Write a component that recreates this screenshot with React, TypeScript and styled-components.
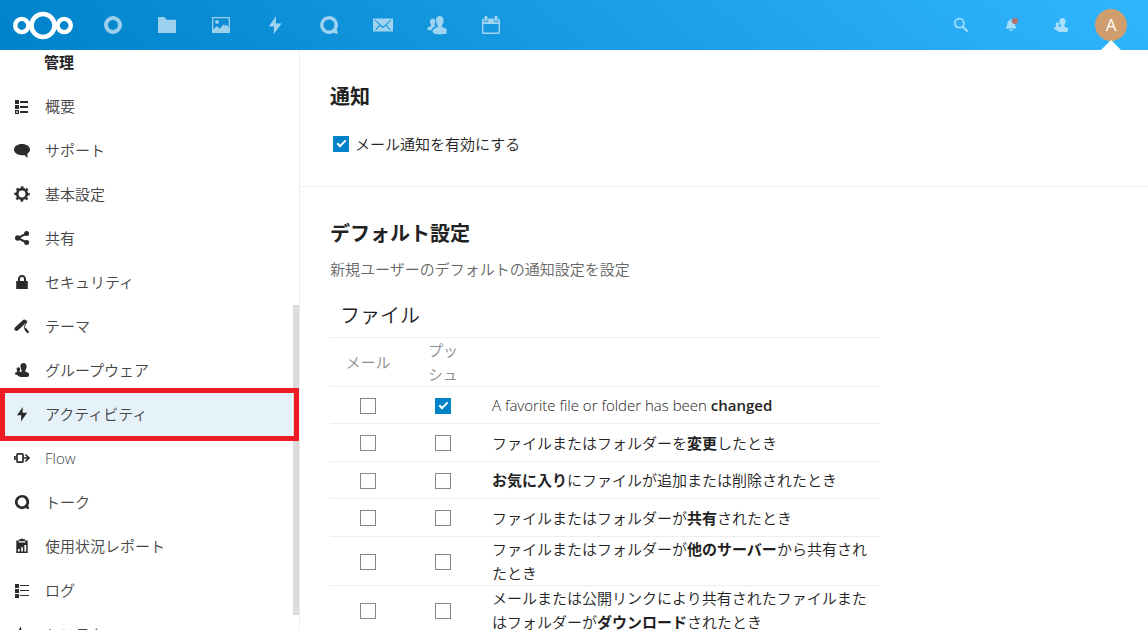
import React from 'react';
import styled, { createGlobalStyle } from 'styled-components';

const GlobalStyle = createGlobalStyle`
  *, *::before, *::after { box-sizing: border-box; }
  body {
    margin: 0;
    background: #fff;
    color: #222;
    font-family: "Open Sans", "Noto Sans CJK JP", sans-serif;
    font-size: 15px;
    font-weight: 350;
    line-height: 24px;
  }
  strong { font-weight: 600; }
`;

const Page = styled.div`
  display: flex;
  flex-direction: column;
  height: 100vh;
  overflow: hidden;
`;

const Header = styled.header`
  display: flex;
  flex: none;
  align-items: center;
  justify-content: space-between;
  height: 50px;
  padding: 0 12px;
  background: linear-gradient(40deg, #0082c9 0%, #30b6ff 100%);
`;

const HeaderGroup = styled.div`
  display: flex;
  align-items: center;
`;

const LogoLink = styled.a`
  display: flex;
  width: 62px;
  margin-right: 12px;
`;

const AppNav = styled.nav`
  display: flex;
`;

const AppLink = styled.a`
  display: flex;
  align-items: center;
  justify-content: center;
  width: 54px;
  height: 50px;
  color: #fff;
  svg { opacity: 0.6; }
`;

const HeaderButton = styled.button`
  display: flex;
  align-items: center;
  justify-content: center;
  width: 50px;
  height: 50px;
  padding: 0;
  border: 0;
  background: none;
  color: #fff;
  svg { opacity: 0.6; }
`;

const AvatarButton = styled(HeaderButton)`
  position: relative;
  &::after {
    content: "";
    position: absolute;
    bottom: 0;
    left: 15px;
    border: 10px solid transparent;
    border-top: 0;
    border-bottom-color: #fff;
  }
`;

const Avatar = styled.span`
  width: 32px;
  height: 32px;
  border-radius: 50%;
  background: #d09e6d;
  font: 17px/32px "Open Sans", sans-serif;
  text-align: center;
`;

const Body = styled.div`
  display: flex;
  flex: 1;
  min-height: 0;
`;

const Sidebar = styled.nav`
  position: relative;
  flex: none;
  width: 300px;
  overflow: hidden;
  border-right: 1px solid #ededed;
`;

const ScrollThumb = styled.div`
  position: absolute;
  top: 255px;
  right: 0;
  width: 6px;
  height: 310px;
  background: #dbdbdb;
`;

const SidebarTitle = styled.h2`
  height: 34px;
  margin: 0;
  padding-left: 44px;
  font-size: 15px;
  line-height: 24px;
`;

const NavList = styled.ul`
  margin: 0;
  padding: 0;
  list-style: none;
`;

const NavItem = styled.li`
  position: relative;
`;

const NavLink = styled.a<{ $active?: boolean }>`
  display: flex;
  align-items: center;
  gap: 15px;
  height: 44px;
  margin-right: 7px;
  padding-left: 14px;
  background: ${(p) => (p.$active ? '#e5f2f9' : 'transparent')};
  color: #444;
  text-decoration: none;
  svg { color: #2b2b2b; }
`;

const Highlight = styled.div`
  position: absolute;
  z-index: 1;
  inset: -4px 0 -5px;
  border: 5px solid #ed1c24;
`;

const Main = styled.main`
  flex: 1;
  min-width: 0;
  overflow: hidden;
`;

const Section = styled.section`
  padding: 30px;
  & + & { border-top: 1px solid #ededed; }
`;

const SectionTitle = styled.h2`
  margin: 0 0 6px;
  font-size: 20px;
  line-height: 34px;
`;

const Hint = styled.p`
  margin: 0;
  color: #666;
`;

const CheckLabel = styled.label`
  display: flex;
  align-items: center;
  gap: 6px;
  margin-top: 18px;
  padding-left: 3px;
`;

const Checkbox = styled.input.attrs({ type: 'checkbox' })`
  appearance: none;
  display: inline-grid;
  place-items: center;
  width: 16px;
  height: 16px;
  margin: 0;
  border: 1px solid #878787;
  background: #fff;
  vertical-align: middle;
  &:checked {
    border-color: #0082c9;
    background: #0082c9;
  }
  &:checked::after {
    content: "";
    width: 5px;
    height: 9px;
    margin-bottom: 3px;
    border: solid #fff;
    border-width: 0 2px 2px 0;
    transform: rotate(45deg);
  }
`;

const GroupTitle = styled.h3`
  margin: 14px 0 0;
  padding: 4px 10px;
  border-bottom: 1px solid #ededed;
  font-size: 20px;
  font-weight: inherit;
  line-height: 34px;
`;

const GroupBlock = styled.div`
  max-width: 550px;
`;

const Table = styled.table`
  width: 100%;
  border-collapse: separate;
  border-spacing: 0;
  table-layout: fixed;
`;

const HeadCell = styled.th<{ $width?: number }>`
  width: ${(p) => (p.$width ? `${p.$width}px` : 'auto')};
  padding: 0 15px;
  border-bottom: 1px solid #ededed;
  color: #8c8c8c;
  font-weight: inherit;
`;

const Row = styled.tr`
  height: 37px;
  &:nth-child(even) { height: 38px; }
`;

const Cell = styled.td<{ $check?: boolean }>`
  padding: 0 0 0 ${(p) => (p.$check ? 0 : 12)}px;
  border-bottom: 1px solid #ededed;
  text-align: ${(p) => (p.$check ? 'center' : 'left')};
  line-height: ${(p) => (p.$check ? '16px' : '24px')};
`;

type IconProps = { size?: number };

const Svg = ({ size = 16, box = 16, children }: IconProps & { box?: number; children: React.ReactNode }) => (
  <svg width={size} height={size} viewBox={`0 0 ${box} ${box}`} fill="currentColor" aria-hidden="true">
    {children}
  </svg>
);

const Logo = () => (
  <svg width="62" height="30" viewBox="0 0 62 30" fill="none" stroke="#fff" aria-hidden="true">
    <circle cx="31" cy="15.5" r="11.5" strokeWidth="4.6" />
    <circle cx="9.8" cy="15.5" r="6.6" strokeWidth="4.4" />
    <circle cx="52.2" cy="15.5" r="6.6" strokeWidth="4.4" />
  </svg>
);

const RingIcon = () => (
  <Svg size={20} box={20}><circle cx="10" cy="10" r="7" fill="none" stroke="currentColor" strokeWidth="4" /></Svg>
);
const FolderIcon = () => (
  <Svg size={20} box={20}><path d="M1.6 2h5.8l2 2.8h9c.3 0 .6.3.6.6v12c0 .3-.3.6-.6.6H1.6c-.3 0-.6-.3-.6-.6V2.6c0-.3.3-.6.6-.6z" /></Svg>
);
const PictureIcon = () => (
  <Svg size={20} box={20}><path fillRule="evenodd" d="M1.6 2h16.8c.3 0 .6.3.6.6v14.8c0 .3-.3.6-.6.6H1.6c-.3 0-.6-.3-.6-.6V2.6c0-.3.3-.6.6-.6zM2.3 3.3v11.2l3.700-3.500 2.800 2.800 4-4.600 1.600 1.800 1.700-1.300 1.600 3.200V3.300zM6 5a1.900 1.900 0 1 1 0 3.800A1.900 1.900 0 0 1 6 5z" /></Svg>
);
const BoltIcon = ({ size = 16 }: IconProps) => (
  <Svg size={size}><path d="M8.8 1 3 9.2h4.2L7 15.4 13.2 6.8H8.6z" /></Svg>
);
const TalkIcon = ({ size = 16 }: IconProps) => (
  <Svg size={size}><path fillRule="evenodd" d="M8 .9a7.1 7.1 0 1 0 3.7 13.2c.9.6 2.4 1.2 3.2.9.4-.4-.4-2.4-.6-3.600A7.100 7.100 0 0 0 8 .9zM8 3.600a4.400 4.400 0 1 1 0 8.800 4.400 4.400 0 0 1 0-8.800z" /></Svg>
);
const MailIcon = () => (
  <Svg size={20} box={20}>
    <path fillRule="evenodd" d="M0 3.5h20v13H0zM2 4.5 1.5 5l5 4.9L2.3 14.5l.7.7 4.3-4.5 2 2c.4.4 1 .4 1.4 0l2-2 4.3 4.5.7-.7-4.2-4.6 5-4.9-.5-.5L10 11.8z" />
  </Svg>
);
const ContactsIcon = ({ size = 16 }: IconProps) => (
  <Svg size={size}>
    <path d="M10.2.8c-1.900 0-3.100 1.400-3 3.300.1 1.600.6 3.400 1.300 4v1.500c-2.100.9-3.700 1.700-4 3.100-.2 1.300 1.200 2.500 4 2.600 2.700.2 5.400.1 7-.3.5-1.800.5-3.300-.2-4-.8-.7-2.300-1-3.300-1.500V8.100c.8-.7 1.300-2.400 1.300-4 0-1.900-1.200-3.300-3.100-3.300z" />
    <path d="M4.500 2.900c-1.400 0-2.100 1-2.100 2.200 0 1.100.4 2.300.9 2.800v.9C1.600 9.400.3 9.900.1 11c-.1.700 1 1.200 3.500 1.200.4-1.700 2-2.900 3.900-3.600l-1.700-.4V8c.5-.6.8-1.800.8-2.900 0-1.200-.7-2.200-2.100-2.200z" />
  </Svg>
);
const GroupIcon = () => (
  <Svg>
    <path d="M9.500 1C7.500 1 6.300 2.500 6.400 4.400 6.500 5.900 7 7.300 7.700 8v1.400l-2 .9V8.600c.2-.4.4-1 .4-1.500C6.100 6 5.300 5.300 4.400 5.300S2.600 6 2.600 7.100c0 .5.1 1.100.4 1.500l-.1 1.300-1.800.8v1.900l2.300.3c.8 1.600 3.200 2.200 6.200 2.200 2.200 0 4.200-.2 5.100-.7.600-1.500.5-2.700-.1-3.300-.8-.8-2.300-1.100-3.300-1.700V8c.7-.7 1.300-2.100 1.300-3.600C12.600 2.500 11.500 1 9.500 1z" />
  </Svg>
);
const CalendarIcon = () => (
  <Svg size={20} box={20}>
    <rect x="3.500" y="1" width="3" height="5.500" rx="1.300" />
    <rect x="13.500" y="1" width="3" height="5.500" rx="1.300" />
    <path fillRule="evenodd" d="M2.700 3.600C1.600 3.700 1 4.300 1 5.400v11.500C1 18.200 1.800 19 3 19h14c1.200 0 2-.8 2-2.100V5.400c0-1.100-.6-1.700-1.700-1.800V6c0 .8-.5 1.300-1.300 1.300h-2c-.8 0-1.300-.5-1.300-1.300V3.600H7.300V6c0 .8-.5 1.300-1.300 1.300H4c-.8 0-1.300-.5-1.300-1.300zM2.400 9h15.200v7.700c0 .6-.3.9-.9.9H3.300c-.6 0-.9-.3-.9-.9z" />
  </Svg>
);
const SearchIcon = () => (
  <Svg>
    <g fill="none" stroke="currentColor" strokeWidth="1.700"><circle cx="6.300" cy="6.200" r="4.500" /><path strokeWidth="2.100" d="m9.600 9.500 5 4.900" /></g>
  </Svg>
);
const BellShape = styled.svg`
  && { opacity: 1; }
`;
const BellIcon = () => (
  <BellShape width="16" height="16" viewBox="0 0 16 16" aria-hidden="true">
    <path opacity=".6" fill="#fff" d="M8.500 1.800c-.9 0-1.200.5-1.200 1.100C5 3.600 4.300 5.100 4.200 7c0 1.700-.3 2.700-1.300 3.400v1.100h10.400v-1.100c-.9-.7-1.300-1.900-1.300-3.400L8.500 4.800zM6 12.500c.4 1 1.100 1.500 2 1.500s1.700-.5 2-1.500z" />
    <circle cx="12" cy="4" r="3.100" fill="#b5726a" />
  </BellShape>
);

const DetailsIcon = () => (
  <Svg>
    <path fillRule="evenodd" d="M1 2h4v4H1zM1 7h4v4H1zM1 12h4v4H1zM2.200 13.200v1.600h1.600v-1.600zM6 3h8v2H6zM6 8h8v2H6zM6 13h8v2H6z" />
  </Svg>
);
const CommentIcon = () => (
  <Svg><path d="M8 2C3.600 2 0 4.300 0 7.600c0 3.200 3.600 5.600 8 5.600.9 0 1.700-.1 2.500-.3.8.9 1.700 2 3 3-.1-1.300 0-2.900-.2-4.100C15 10.800 16 9.300 16 7.600 16 4.300 12.400 2 8 2z" /></Svg>
);
const GearIcon = () => (
  <Svg>
    <g fill="none" stroke="currentColor"><circle cx="8" cy="8" r="4.800" strokeWidth="2.700" /><circle cx="8" cy="8" r="6.700" strokeWidth="2" strokeDasharray="2.630 2.630" strokeDashoffset="1.315" /></g>
  </Svg>
);
const ShareIcon = () => (
  <Svg>
    <circle cx="3.700" cy="8" r="2.700" /><circle cx="12.600" cy="3.600" r="2.500" /><circle cx="12.600" cy="12.500" r="2.500" />
    <path d="M12.600 3.600 3.700 8l8.900 4.500" fill="none" stroke="currentColor" strokeWidth="2" />
  </Svg>
);
const LockIcon = () => (
  <Svg><path fillRule="evenodd" d="M8 1C5.500 1 4 2.700 4 5.200V7H2.200v8h11.600V7H12V5.200C12 2.700 10.500 1 8 1zM8 3c1.300 0 2 .9 2 2.300V7H6V5.300C6 3.900 6.700 3 8 3z" /></Svg>
);
const PaintIcon = () => (
  <Svg>
    <path d="m2.600 10.800 7.600-7" stroke="currentColor" strokeWidth="4.200" strokeLinecap="round" />
    <path d="M11.500 2.300c1.700.2 1.500 1.400.8 2.700-.9 1.700-1.900 3-1.900 4.200 0 .9.800 1.600 1.600 2.400" fill="none" stroke="currentColor" strokeWidth="1" />
    <path d="m11.500 11.200 2.300 2.800" stroke="currentColor" strokeWidth="2.200" strokeLinecap="round" />
  </Svg>
);
const FlowIcon = () => (
  <Svg><g fill="none" stroke="currentColor" strokeWidth="1.700"><rect x="3" y="3.800" width="6" height="8.400" rx="1" /><path d="M.9 6v4M9 8h6M11.300 4.500 15 8l-3.700 3.500" /></g></Svg>
);
const ReportIcon = () => (
  <Svg><path fillRule="evenodd" d="M2.300 2.400H5V1.200h2L7.500.5h1l.5.700h2v1.200h2.700V15H2.300zM4.700 3.200v1.300h6.600V3.200zM4 11v2.500h1.700V11zM7.200 9.200v4.300h1.700V9.200zM10.400 7v6.500h1.800V7z" /></Svg>
);
const LogIcon = () => (
  <Svg><path d="M1 2h4v4H1zM1 7h4v4H1zM1 12h4v4H1zM6 3h9v1H6zM6 8h9v1H6zM6 13h9v1H6z" /></Svg>
);
const PulseIcon = () => (
  <Svg><path d="M0 9h3.500L6.300 3l3.200 11 2-5H16" fill="none" stroke="currentColor" strokeWidth="1.800" /></Svg>
);

const apps = [
  { name: 'ダッシュボード', icon: <RingIcon /> },
  { name: 'ファイル', icon: <FolderIcon /> },
  { name: '写真', icon: <PictureIcon /> },
  { name: 'アクティビティ', icon: <BoltIcon size={20} /> },
  { name: 'トーク', icon: <TalkIcon size={20} /> },
  { name: 'メール', icon: <MailIcon /> },
  { name: '連絡先', icon: <ContactsIcon size={20} /> },
  { name: 'カレンダー', icon: <CalendarIcon /> },
];

const navItems = [
  { label: '概要', icon: <DetailsIcon /> },
  { label: 'サポート', icon: <CommentIcon /> },
  { label: '基本設定', icon: <GearIcon /> },
  { label: '共有', icon: <ShareIcon /> },
  { label: 'セキュリティ', icon: <LockIcon /> },
  { label: 'テーマ', icon: <PaintIcon /> },
  { label: 'グループウェア', icon: <GroupIcon /> },
  { label: 'アクティビティ', icon: <BoltIcon />, active: true },
  { label: 'Flow', icon: <FlowIcon /> },
  { label: 'トーク', icon: <TalkIcon /> },
  { label: '使用状況レポート', icon: <ReportIcon /> },
  { label: 'ログ', icon: <LogIcon /> },
  { label: 'システム', icon: <PulseIcon /> },
];

const fileEvents = [
  { id: 'favorite-changed', push: true, text: <>A favorite file or folder has been <strong>changed</strong></> },
  { id: 'changed', push: false, text: <>ファイルまたはフォルダーを<strong>変更</strong>したとき</> },
  { id: 'favorite', push: false, text: <><strong>お気に入り</strong>にファイルが追加または削除されたとき</> },
  { id: 'shared', push: false, text: <>ファイルまたはフォルダーが<strong>共有</strong>されたとき</> },
  { id: 'remote-share', push: false, text: <>ファイルまたはフォルダーが<strong>他のサーバー</strong>から共有されたとき</> },
  { id: 'public-link', push: false, text: <>メールまたは公開リンクにより共有されたファイルまたはフォルダーが<strong>ダウンロード</strong>されたとき</> },
];

export default function App() {
  return (
    <Page lang="ja">
      <GlobalStyle />
      <Header>
        <HeaderGroup>
          <LogoLink href="#" aria-label="Nextcloud"><Logo /></LogoLink>
          <AppNav>
            {apps.map((app) => (
              <AppLink key={app.name} href="#" aria-label={app.name}>{app.icon}</AppLink>
            ))}
          </AppNav>
        </HeaderGroup>
        <HeaderGroup>
          <HeaderButton aria-label="検索"><SearchIcon /></HeaderButton>
          <HeaderButton aria-label="通知"><BellIcon /></HeaderButton>
          <HeaderButton aria-label="連絡先"><GroupIcon /></HeaderButton>
          <AvatarButton aria-label="設定"><Avatar>A</Avatar></AvatarButton>
        </HeaderGroup>
      </Header>
      <Body>
        <Sidebar>
          <ScrollThumb />
          <SidebarTitle>管理</SidebarTitle>
          <NavList>
            {navItems.map((item) => (
              <NavItem key={item.label}>
                <NavLink href="#" $active={item.active}>{item.icon}{item.label}</NavLink>
                {item.active && <Highlight />}
              </NavItem>
            ))}
          </NavList>
        </Sidebar>
        <Main>
          <Section>
            <SectionTitle>通知</SectionTitle>
            <CheckLabel><Checkbox defaultChecked />メール通知を有効にする</CheckLabel>
          </Section>
          <Section>
            <SectionTitle>デフォルト設定</SectionTitle>
            <Hint>新規ユーザーのデフォルトの通知設定を設定</Hint>
            <GroupBlock>
              <GroupTitle>ファイル</GroupTitle>
              <Table>
                <thead>
                  <tr>
                    <HeadCell $width={76}>メール</HeadCell>
                    <HeadCell $width={74}>プッシュ</HeadCell>
                    <HeadCell />
                  </tr>
                </thead>
                <tbody>
                  {fileEvents.map((event) => (
                    <Row key={event.id}>
                      <Cell $check><Checkbox aria-labelledby={event.id} /></Cell>
                      <Cell $check><Checkbox aria-labelledby={event.id} defaultChecked={event.push} /></Cell>
                      <Cell id={event.id}>{event.text}</Cell>
                    </Row>
                  ))}
                </tbody>
              </Table>
            </GroupBlock>
          </Section>
        </Main>
      </Body>
    </Page>
  );
}
